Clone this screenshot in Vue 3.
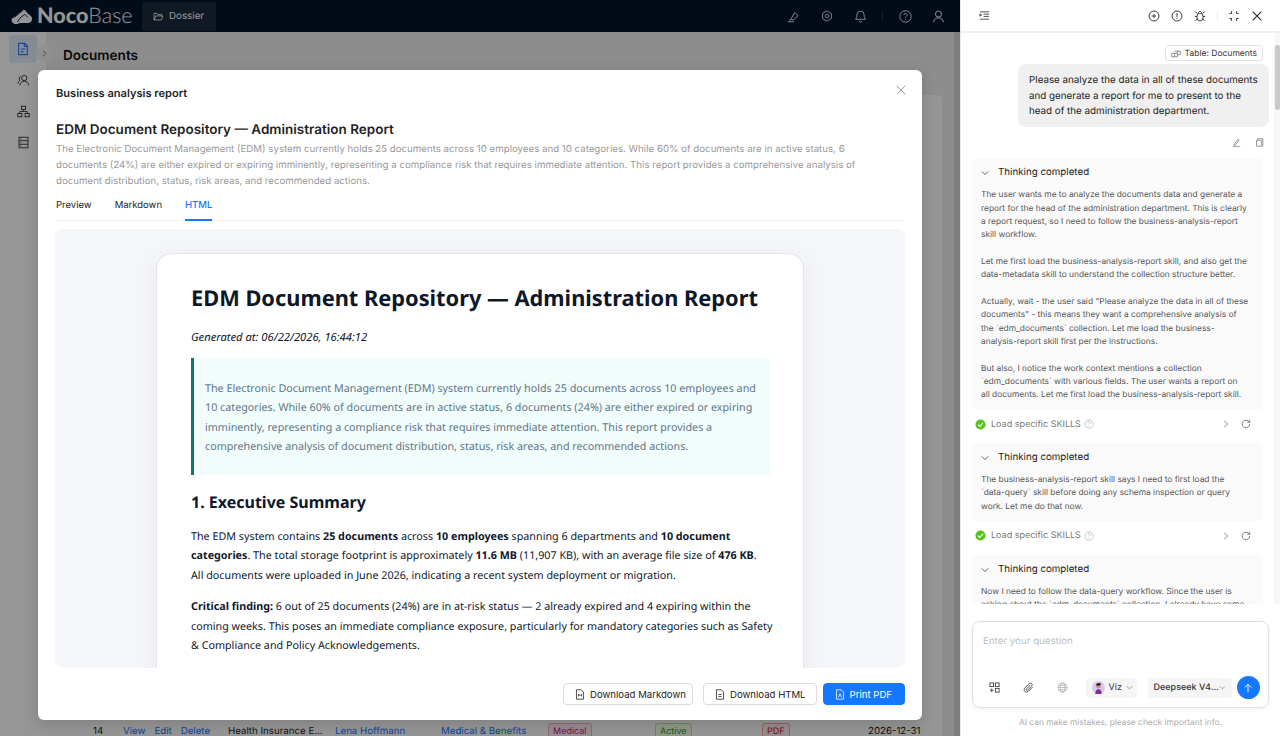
<script setup>
const navIcons = ['doc', 'people', 'tree', 'db']
const thinking = [
  {
    cls: 'c1',
    paras: [
      'The user wants me to analyze the documents data and generate a\nreport for the head of the administration department. This is clearly\na report request, so I need to follow the business-analysis-report\nskill workflow.',
      'Let me first load the business-analysis-report skill, and also get the\ndata-metadata skill to understand the collection structure better.',
      'Actually, wait - the user said "Please analyze the data in all of these\ndocuments" - this means they want a comprehensive analysis of\nthe `edm_documents` collection. Let me load the business-\nanalysis-report skill first per the instructions.',
      'But also, I notice the work context mentions a collection\n`edm_documents` with various fields. The user wants a report on\nall documents. Let me first load the business-analysis-report skill.'
    ],
    tool: true
  },
  {
    cls: 'c2',
    paras: ['The business-analysis-report skill says I need to first load the\n`data-query` skill before doing any schema inspection or query\nwork. Let me do that now.'],
    tool: true
  },
  {
    cls: 'c3',
    paras: ['Now I need to follow the data-query workflow. Since the user is\nasking about the `edm_documents` collection, I already have some\ncontext from the work context.'],
    tool: false
  }
]
</script>

<template>
  <div class="app">
    <section class="main">
      <header class="topbar">
        <div class="brand">
          <svg class="logo" viewBox="0 0 24 18" width="22" height="17"><path d="M1 11.5 12.5 2.2c1-.8 2.2-.7 3 .2l3 3.6 1.6 1.2c2.5 1.8 3.5 3.6 2.6 6-.8 2.3-3 3.4-5.2 2.800H9.500l-1.600.8c-2.600.9-5.600.3-6.700-1.800-.6-1-.7-2.200-.2-3.500Z" fill="#fff"/><path d="m3.5 10 10-8M7 15l3-4.500 5-4 3.200 3.400" stroke="#001529" stroke-width="1" fill="none"/></svg>
          <span class="noco">Noco</span><span class="base">Base</span>
        </div>
        <div class="tab-dossier">
          <svg viewBox="0 0 16 16" width="11" height="11" fill="none" stroke="#fff" stroke-width="1.2"><path d="M1.500 13V3.500h4.300l1.400 1.700h5.300v2M1.500 13h10.800l2.200-5.800H4z"/></svg>
          <span>Dossier</span>
        </div>
        <div class="top-icons">
          <svg viewBox="0 0 16 16" width="13" height="13" fill="none" stroke="#fff" stroke-width="1.1"><path d="m5 11 4.500-8 4 4-6 5.500zM1.500 14.500h7M5 11l-2.500 3"/></svg>
          <svg viewBox="0 0 16 16" width="12" height="12" fill="none" stroke="#fff" stroke-width="1.1"><path d="M8 1.200 13.800 4.500v7L8 14.800 2.200 11.500v-7z"/><circle cx="8" cy="8" r="2.400"/></svg>
          <svg viewBox="0 0 16 16" width="13" height="13" fill="none" stroke="#fff" stroke-width="1.100"><path d="M8 1.500A4.500 4.500 0 0 0 3.500 6c0 3-1 4.500-1.500 5.500h12c-.5-1-1.500-2.500-1.500-5.500A4.500 4.500 0 0 0 8 1.500zM6.500 13.500a1.500 1.500 0 0 0 3 0"/></svg>
          <i class="sep"></i>
          <svg viewBox="0 0 16 16" width="13" height="13" fill="none" stroke="#fff" stroke-width="1.1"><circle cx="8" cy="8" r="7"/><path d="M6 6.300a2 2 0 1 1 3 1.700c-.7.400-1 .8-1 1.600M8 11.300v.8"/></svg>
          <svg class="user" viewBox="0 0 16 16" width="13" height="13" fill="none" stroke="#fff" stroke-width="1.2"><circle cx="8" cy="5" r="3.700"/><path d="M2 15c.4-3.500 2.700-5.300 6-5.300s5.600 1.800 6 5.300"/></svg>
        </div>
      </header>

      <div class="body">
        <nav class="rail">
          <span v-for="n in navIcons" :key="n" class="rail-item" :class="{ active: n === 'doc' }">
            <svg v-if="n === 'doc'" viewBox="0 0 16 16" width="14" height="14" fill="none" stroke="#2f7dff" stroke-width="1.3"><path d="M3 1.500h7l3 3v10H3zM9.500 1.500v3.500H13M5.500 8h5M5.500 11h3"/></svg>
            <svg v-else-if="n === 'people'" viewBox="0 0 16 16" width="13" height="13" fill="none" stroke="#333" stroke-width="1.100"><circle cx="9" cy="5" r="3.300"/><path d="M3.500 14c.4-3 2.600-5 5.500-5s5 2 5.500 5M4.500 2.500a3 3 0 0 0-.8 5C2.300 8.500 1.500 10 1.300 12"/></svg>
            <svg v-else-if="n === 'tree'" viewBox="0 0 16 16" width="13" height="13" fill="none" stroke="#333" stroke-width="1.100"><rect x="5.500" y="1.500" width="5" height="4"/><rect x="1" y="10.500" width="5" height="4"/><rect x="10" y="10.500" width="5" height="4"/><path d="M8 5.500V8M3.500 10.500V8h9v2.500"/></svg>
            <svg v-else viewBox="0 0 16 16" width="13" height="13" fill="none" stroke="#333" stroke-width="1.100"><rect x="2.500" y="1.500" width="11" height="13"/><path d="M2.500 5.800h11M2.500 10.200h11M4.500 3.700h1M4.500 8h1M4.500 12.300h1"/></svg>
          </span>
        </nav>
        <span class="toggle"><svg viewBox="0 0 8 8" width="7" height="7" fill="none" stroke="#666"><path d="m2.500 1 3 3-3 3"/></svg></span>
        <div class="content">
          <h2 class="page-title">Documents</h2>
          <div class="table-card">
            <div class="row">
              <span class="num">14</span>
              <span class="links"><a>View</a><a>Edit</a><a>Delete</a></span>
              <span class="cell title">Health Insurance E...</span>
              <a class="cell owner">Lena Hoffmann</a>
              <a class="cell cat">Medical &amp; Benefits</a>
              <span class="cell t1"><b class="tag pink">Medical</b></span>
              <span class="cell t2"><b class="tag green">Active</b></span>
              <span class="cell t3"><b class="tag red">PDF</b></span>
              <span class="date">2026-12-31</span>
            </div>
          </div>
        </div>
        <i class="page-scroll"></i>
      </div>

      <div class="mask"></div>

      <div class="modal">
        <div class="modal-head">
          <span>Business analysis report</span>
          <svg viewBox="0 0 12 12" width="10" height="10" fill="none" stroke="#777" stroke-width=".9"><path d="m1 1 10 10M11 1 1 11"/></svg>
        </div>
        <h3 class="report-title">EDM Document Repository — Administration Report</h3>
        <p class="report-sub">The Electronic Document Management (EDM) system currently holds 25 documents across 10 employees and 10 categories. While 60% of documents are in active status, 6 documents (24%) are either expired or expiring imminently, representing a compliance risk that requires immediate attention. This report provides a comprehensive analysis of document distribution, status, risk areas, and recommended actions.</p>
        <div class="tabs">
          <span>Preview</span><span>Markdown</span><span class="on">HTML</span>
        </div>
        <div class="preview">
          <article class="paper">
            <h1>EDM Document Repository — Administration Report</h1>
            <p class="gen">Generated at: 06/22/2026, 16:44:12</p>
            <blockquote>The Electronic Document Management (EDM) system currently holds 25 documents across 10 employees and 10 categories. While 60% of documents are in active status, 6 documents (24%) are either expired or expiring imminently, representing a compliance risk that requires immediate attention. This report provides a comprehensive analysis of document distribution, status, risk areas, and recommended actions.</blockquote>
            <h2>1. Executive Summary</h2>
            <p class="body-p">The EDM system contains <b>25 documents</b> across <b>10 employees</b> spanning 6 departments and <b>10 document categories</b>. The total storage footprint is approximately <b>11.6 MB</b> (11,907 KB), with an average file size of <b>476 KB</b>.<br>All documents were uploaded in June 2026, indicating a recent system deployment or migration.</p>
            <p class="body-p"><b>Critical finding:</b> 6 out of 25 documents (24%) are in at-risk status — 2 already expired and 4 expiring within the coming weeks. This poses an immediate compliance exposure, particularly for mandatory categories such as Safety &amp; Compliance and Policy Acknowledgements.</p>
          </article>
        </div>
        <div class="modal-foot">
          <button class="btn">
            <svg viewBox="0 0 12 14" width="10" height="11" fill="none" stroke="currentColor"><path d="M1.500 1h6l3 3v9h-9zM4 9.500V6.500l2 2 2-2v3"/></svg>Download Markdown
          </button>
          <button class="btn">
            <svg viewBox="0 0 12 14" width="10" height="11" fill="none" stroke="currentColor"><path d="M1.500 1h6l3 3v9h-9zM4 7h4M4 9.500h4"/></svg>Download HTML
          </button>
          <button class="btn primary">
            <svg viewBox="0 0 12 14" width="10" height="11" fill="none" stroke="currentColor"><path d="M1.500 1h6l3 3v9h-9zM4 10.500 6 6l2 4.500"/></svg>Print PDF
          </button>
        </div>
      </div>
    </section>

    <aside class="panel">
      <div class="panel-head">
        <svg viewBox="0 0 12 12" width="11" height="11" fill="none" stroke="#444"><path d="M1 2h10M5 4.500h6M5 7h6M1 10h10M1 4.200l2 1.300-2 1.300z"/></svg>
        <div class="panel-actions">
          <svg viewBox="0 0 14 14" width="12" height="12" fill="none" stroke="#333" stroke-width="1.100"><circle cx="7" cy="7" r="5.800"/><path d="M7 4.500v5M4.500 7h5"/></svg>
          <svg viewBox="0 0 14 14" width="12" height="12" fill="none" stroke="#333" stroke-width="1.100"><circle cx="7" cy="7" r="5.800"/><path d="M7 3.500v4.500M7 9.500v1"/></svg>
          <svg viewBox="0 0 14 14" width="12" height="12" fill="none" stroke="#333" stroke-width="1.100"><rect x="3.500" y="4" width="7" height="8.500" rx="3.200"/><path d="M5 4c0-3 4-3 4 0M1.500 1.800 3.800 4.200M12.500 1.800l-2.300 2.400M1 7.500h2.500M10.500 7.500H13M1.500 12.500l2.300-2M12.500 12.500l-2.300-2"/></svg>
          <i class="sep light"></i>
          <svg viewBox="0 0 14 14" width="12" height="12" fill="none" stroke="#333" stroke-width="1.200"><path d="M1.500 4.500 4 4V1.500M12.500 4.500 10 4V1.500M1.500 9.500 4 10v2.500M12.500 9.500 10 10v2.500"/></svg>
          <svg viewBox="0 0 14 14" width="12" height="12" fill="none" stroke="#222" stroke-width="1.200"><path d="m2 2 10 10M12 2 2 12"/></svg>
        </div>
      </div>

      <div class="chat">
        <div class="chat-scroll">
          <div class="chip">
            <svg viewBox="0 0 14 10" width="10" height="8" fill="none" stroke="#555" stroke-width=".9"><path d="M5 1h8v5H9M1 4h8v5H1zM5 4v5M9 1v3"/></svg>
            Table: Documents
          </div>
          <div class="bubble">Please analyze the data in all of these documents and generate a report for me to present to the head of the administration department.</div>
          <div class="bubble-actions">
            <svg viewBox="0 0 12 12" width="9" height="9" fill="none" stroke="#777"><path d="m3 8 5-6.500 1.500 1.300L4.500 9.300 2.700 10zM1 11.500h10"/></svg>
            <svg viewBox="0 0 12 12" width="9" height="9" fill="none" stroke="#777"><path d="M3.500 3V1h7v9.500H8.500M2 3h6.500v8H2z"/></svg>
          </div>
          <template v-for="t in thinking" :key="t.cls">
            <div class="think">
              <div class="think-head">
                <svg viewBox="0 0 10 10" width="8" height="8" fill="none" stroke="#444"><path d="m1 3 4 4 4-4"/></svg>
                <span>Thinking completed</span>
              </div>
              <div class="think-body">
                <p v-for="(p, i) in t.paras" :key="i">{{ p }}</p>
              </div>
            </div>
            <div v-if="t.tool" class="tool">
              <svg viewBox="0 0 12 12" width="11" height="11"><circle cx="6" cy="6" r="5.500" fill="#52c41a"/><path d="m3.200 6.100 2 2 3.500-3.800" fill="none" stroke="#fff" stroke-width="1.200"/></svg>
              <span class="tool-name">Load specific SKILLS</span>
              <svg class="help" viewBox="0 0 12 12" width="10" height="10" fill="none" stroke="#aaa" stroke-width=".8"><circle cx="6" cy="6" r="5"/><path d="M4.500 4.800a1.500 1.500 0 1 1 2.300 1.300c-.5.300-.8.600-.8 1.100M6 8.300v.7"/></svg>
              <span class="spacer"></span>
              <svg viewBox="0 0 10 10" width="8" height="8" fill="none" stroke="#888"><path d="m2.500 1 5 4-5 4"/></svg>
              <svg viewBox="0 0 12 12" width="10" height="10" fill="none" stroke="#666"><path d="M10.500 6a4.500 4.500 0 1 1-1.300-3.200L10.500 4M10.500 1v3H7.700"/></svg>
            </div>
          </template>
        </div>
        <div class="scroll-track"><i></i></div>
      </div>

      <div class="composer">
        <div class="box">
          <div class="placeholder">Enter your question</div>
          <div class="box-tools">
            <svg viewBox="0 0 12 12" width="11" height="11" fill="none" stroke="#444"><rect x="1" y="1" width="4" height="4"/><rect x="7" y="1" width="4" height="4"/><rect x="7" y="7" width="4" height="4"/><path d="M3 7v4M1 9h4"/></svg>
            <svg viewBox="0 0 12 12" width="11" height="11" fill="none" stroke="#444"><path d="M10.500 5.500 6 10c-1.200 1.200-3 1.200-4 .2s-1-2.700.2-3.900L6.800 1.800c.8-.8 2-.8 2.700 0s.7 1.800 0 2.600L5 8.800c-.4.400-1 .4-1.300 0s-.3-.9 0-1.300L8 3.300"/></svg>
            <svg viewBox="0 0 12 12" width="11" height="11" fill="none" stroke="#aaa" stroke-width=".8"><circle cx="6" cy="6" r="5"/><ellipse cx="6" cy="6" rx="2.300" ry="5"/><path d="M1 6h10M1.700 3.500h8.600M1.700 8.500h8.600"/></svg>
            <div class="pill viz">
              <svg viewBox="0 0 14 14" width="13" height="13"><circle cx="7" cy="7" r="7" fill="#dcc6ee"/><path d="M3.500 14c.2-3.500 1.600-5 3.500-5s3.300 1.500 3.500 5z" fill="#7b2d9e"/><circle cx="7" cy="5.500" r="2.500" fill="#c98f78"/><path d="M4.200 4.500C4.500 2 8 1.500 10 3L8 5z" fill="#222"/></svg>
              <span>Viz</span>
              <svg viewBox="0 0 10 10" width="7" height="7" fill="none" stroke="#777"><path d="m1 3 4 4 4-4"/></svg>
            </div>
            <div class="pill model">
              <span>Deepseek V4...</span>
              <svg viewBox="0 0 10 10" width="7" height="7" fill="none" stroke="#777"><path d="m1 3 4 4 4-4"/></svg>
            </div>
            <span class="send"><svg viewBox="0 0 12 12" width="10" height="10" fill="none" stroke="#fff" stroke-width="1.100"><path d="M6 11V1.500M2 5.500l4-4 4 4"/></svg></span>
          </div>
        </div>
        <div class="disclaimer">AI can make mistakes, please check important info.</div>
      </div>
    </aside>
  </div>
</template>

<style scoped>
.app { display: flex; width: 1280px; height: 736px; overflow: hidden; background: #fff; font-family: Inter, "Liberation Sans", sans-serif; color: #1f1f1f; text-rendering: geometricPrecision; }
.main { position: relative; width: 960px; height: 736px; display: flex; flex-direction: column; overflow: hidden; flex: none; }
.topbar { height: 32px; background: #001529; display: flex; align-items: center; flex: none; }
.brand { display: flex; align-items: center; margin-left: 11px; width: 131px; color: #fff; font-family: Lato, sans-serif; font-size: 21.500px; line-height: 1; flex: none; }
.logo { margin-right: 4px; }
.noco { font-weight: 900; }
.base { font-weight: 300; }
.tab-dossier { width: 74px; height: 29px; background: #1b2a3d; border-radius: 3px; display: flex; align-items: center; gap: 5px; padding: 1px 0 0 11px; box-sizing: border-box; color: #fff; font-size: 9.800px; }
.top-icons { margin-left: auto; display: flex; align-items: center; gap: 21px; margin-right: 15px; }
.top-icons .user { margin-left: -1px; }
.sep { display: block; width: 1px; height: 10px; background: #2a3644; margin: 0 -5px 0 -6px; }
.sep.light { background: #eee; margin: 0 -.5px; }
.body { flex: 1; display: flex; background: #fff; position: relative; min-height: 0; }
.rail { width: 46px; flex: none; display: flex; flex-direction: column; align-items: center; padding: 3px 9px 0 9px; box-sizing: border-box; gap: 3.300px; }
.rail-item { width: 28px; height: 28px; border-radius: 4px; display: flex; align-items: center; justify-content: center; }
.rail-item.active { background: #e2ecfb; }
.toggle { position: absolute; left: 36px; top: 13px; width: 17px; height: 17px; border-radius: 50%; background: #f5f5f5; display: flex; align-items: center; justify-content: center; }
.content { flex: 1; min-width: 0; padding: 14px 0 0 17px; display: flex; flex-direction: column; background: #f0f0f0; }
.page-title { margin: 0; font-size: 13.600px; line-height: 20px; font-weight: 600; color: #111; }
.table-card { margin: 29px 18px 0 -17px; background: #fff; flex: 1; display: flex; flex-direction: column; justify-content: flex-end; border-radius: 6px 6px 0 0; font-size: 9.700px; }
.row { display: flex; align-items: center; height: 17px; white-space: nowrap; position: relative; top: 4px; overflow: hidden; flex: none; }
.num { margin-left: 47px; width: 30px; }
.links { display: flex; gap: 9px; width: 105px; }
.links a, .owner, .cat { color: #1677ff; }
.title { width: 107px; }
.owner { width: 106px; }
.cat { width: 107px; }
.t1 { width: 107px; }
.t2 { width: 107px; }
.t3 { width: 106px; }
.tag { font-weight: 400; font-size: 9px; border: 1px solid; border-radius: 3px; padding: 2px 4px; }
.pink { color: #c41d7f; background: #fff0f6; border-color: #ffadd2; }
.green { color: #389e0d; background: #f6ffed; border-color: #b7eb8f; }
.red { color: #cf1322; background: #fff1f0; border-color: #ffa39e; }
.page-scroll { position: absolute; right: 0; top: 0; bottom: 0; width: 6px; background: #d8d8d8; }
.mask { position: absolute; inset: 0; background: rgba(0, 0, 0, .41); }

.modal { position: absolute; left: 38px; top: 70px; width: 884px; height: 650px; background: #fff; border-radius: 6px; box-shadow: 0 4px 16px rgba(0,0,0,.16); padding: 0 17px; box-sizing: border-box; display: flex; flex-direction: column; }
.modal-head { height: 46px; flex: none; display: flex; align-items: center; justify-content: space-between; font-size: 11.100px; font-weight: 600; padding-left: 1px; box-sizing: border-box; }
.modal-head svg { margin-top: -6px; margin-right: -1px; }
.report-title { margin: 4px 0 0 1px; font-size: 13.500px; line-height: 20px; font-weight: 600; color: #1f1f1f; }
.report-sub { margin: 2px 0 0 1px; max-width: 815px; font-size: 9.700px; line-height: 16px; color: #999; }
.tabs { display: flex; gap: 23px; margin: -1px 0 0 1px; height: 32px; border-bottom: 1px solid #f0f0f0; font-size: 9.500px; line-height: 33px; color: #222; flex: none; box-sizing: border-box; }
.tabs span { box-sizing: border-box; height: 32px; }
.tabs .on { color: #1677ff; font-weight: 500; border-bottom: 2px solid #1677ff; }
.preview { margin-top: 8px; flex: none; height: 439px; background: #f5f6fa; border-radius: 8px; overflow: hidden; padding: 24px 101px 0; box-sizing: border-box; font-family: "Noto Sans", "Open Sans", sans-serif; }
.paper { background: #fff; border: 1px solid #e3e5ea; border-bottom: 0; border-radius: 16px 16px 0 0; box-shadow: 0 6px 24px rgba(15,23,42,.06); padding: 27px 34px 30px; box-sizing: border-box; height: 460px; color: #0f172a; font-size: 10.750px; line-height: 19.500px; }
.paper h1 { margin: 0; font-size: 21.800px; line-height: 36px; font-weight: 700; white-space: nowrap; }
.gen { margin: 11px 0 0; font-style: italic; font-size: 11.200px; }
.paper blockquote { margin: 10px -1px 0 0; background: #f0fdfa; border-left: 3px solid #0f766e; padding: 22px 13px 17px 11px; color: #64748b; }
.paper h2 { margin: 15px 0 0; font-size: 16px; line-height: 25px; font-weight: 700; }
.body-p { margin: 12px -6px 0 0; }
.paper h2 + .body-p { margin-top: 13px; }
.modal-foot { flex: 1; display: flex; align-items: center; justify-content: flex-end; gap: 10px; }
.btn { height: 22px; border: 1px solid #dcdcdc; background: #fff; border-radius: 4px; padding: 0 6px 0 11px; display: flex; align-items: center; gap: 5px; font: 9.600px Inter, sans-serif; color: #222; box-shadow: 0 1px 0 rgba(0,0,0,.02); }
.btn:nth-child(2) { margin-right: -4px; padding-right: 10px; }
.btn.primary { background: #1677ff; border-color: #1677ff; color: #fff; padding-right: 12px; }

.panel { width: 320px; height: 736px; flex: none; border-left: 1px solid #e8e8e8; box-sizing: border-box; display: flex; flex-direction: column; background: #fff; }
.panel-head { height: 33px; flex: none; border-bottom: 2px solid #f0f0f0; box-sizing: border-box; display: flex; align-items: center; padding: 0 17px 0 18px; justify-content: space-between; }
.panel-actions { display: flex; align-items: center; gap: 11px; }
.chat { height: 571px; flex: none; position: relative; display: flex; overflow: hidden; }
.chat-scroll { width: 297px; margin-left: 11px; display: flex; flex-direction: column; padding-top: 12px; flex: none; }
.chip { align-self: flex-end; margin-right: 6px; height: 16px; box-sizing: border-box; border: 1px solid #e2e2e2; border-radius: 3px; padding: 1px 5px 0; display: flex; align-items: center; gap: 4px; font-size: 8.500px; color: #333; flex: none; white-space: nowrap; }
.bubble { flex: none; align-self: flex-end; width: 251px; box-sizing: border-box; margin-top: 3px; padding: 9px 11px 7px; background: #f0f0f0; border-radius: 8px; font-size: 9.800px; line-height: 15.600px; color: #222; }
.bubble-actions { flex: none; height: 31.500px; display: flex; justify-content: flex-end; align-items: center; gap: 14px; padding-right: 5px; box-sizing: border-box; }
.think { flex: none; width: 291px; background: #fafafa; border-radius: 6px; padding: 8px 9px 7px; box-sizing: border-box; }
.think-head { display: flex; align-items: center; gap: 9px; font-size: 9.750px; line-height: 14px; color: #222; }
.think-body { margin-top: 9px; font-size: 8.400px; line-height: 13.330px; color: #555; white-space: pre-line; }
.think-body p { margin: 0 0 13.330px; }
.think-body p:last-child { margin-bottom: 0; }
.tool { flex: none; width: 291px; height: 33.500px; display: flex; align-items: center; padding: 0 12px 4px 3px; box-sizing: border-box; font-size: 9px; color: #777; }
.tool-name { margin-left: 5px; }
.help { margin-left: 3px; }
.spacer { flex: 1; }
.tool svg:last-child { margin-left: 11px; }
.scroll-track { position: absolute; right: 0; top: 0; bottom: 0; width: 6px; background: #f7f7f7; }
.scroll-track i { display: block; margin: 12px 0 0 1px; width: 5px; height: 65px; border-radius: 3px; background: #c9c9c9; }
.composer { flex: 1; position: relative; background: #fff; padding: 17px 11px 0; }
.box { height: 87px; border: 1px solid #e0e0e0; border-radius: 8px; box-shadow: 0 1px 4px rgba(0,0,0,.06); box-sizing: border-box; display: flex; flex-direction: column; justify-content: space-between; padding: 13px 8px 8px 10px; }
.placeholder { font-size: 9.750px; color: #bfbfbf; line-height: 14px; }
.box-tools { display: flex; align-items: center; padding-left: 6px; }
.box-tools > svg { margin-right: 23px; flex: none; }
.box-tools > svg:nth-child(3) { margin-right: 17.500px; }
.pill { height: 20px; background: #f5f5f5; border-radius: 4px; display: flex; align-items: center; font-size: 9px; color: #333; box-sizing: border-box; white-space: nowrap; }
.viz { width: 51px; padding-left: 6px; gap: 4px; }
.model { width: 84px; padding: 0 6px; margin-left: 11px; justify-content: space-between; font-weight: 500; }
.send { width: 23px; height: 23px; margin-left: 5px; border-radius: 50%; background: #1677ff; display: flex; align-items: center; justify-content: center; }
.disclaimer { text-align: center; margin-top: 9px; font-size: 8.400px; color: #aaa; line-height: 12px; }
</style>

<style>
html, body { margin: 0; }
</style>
